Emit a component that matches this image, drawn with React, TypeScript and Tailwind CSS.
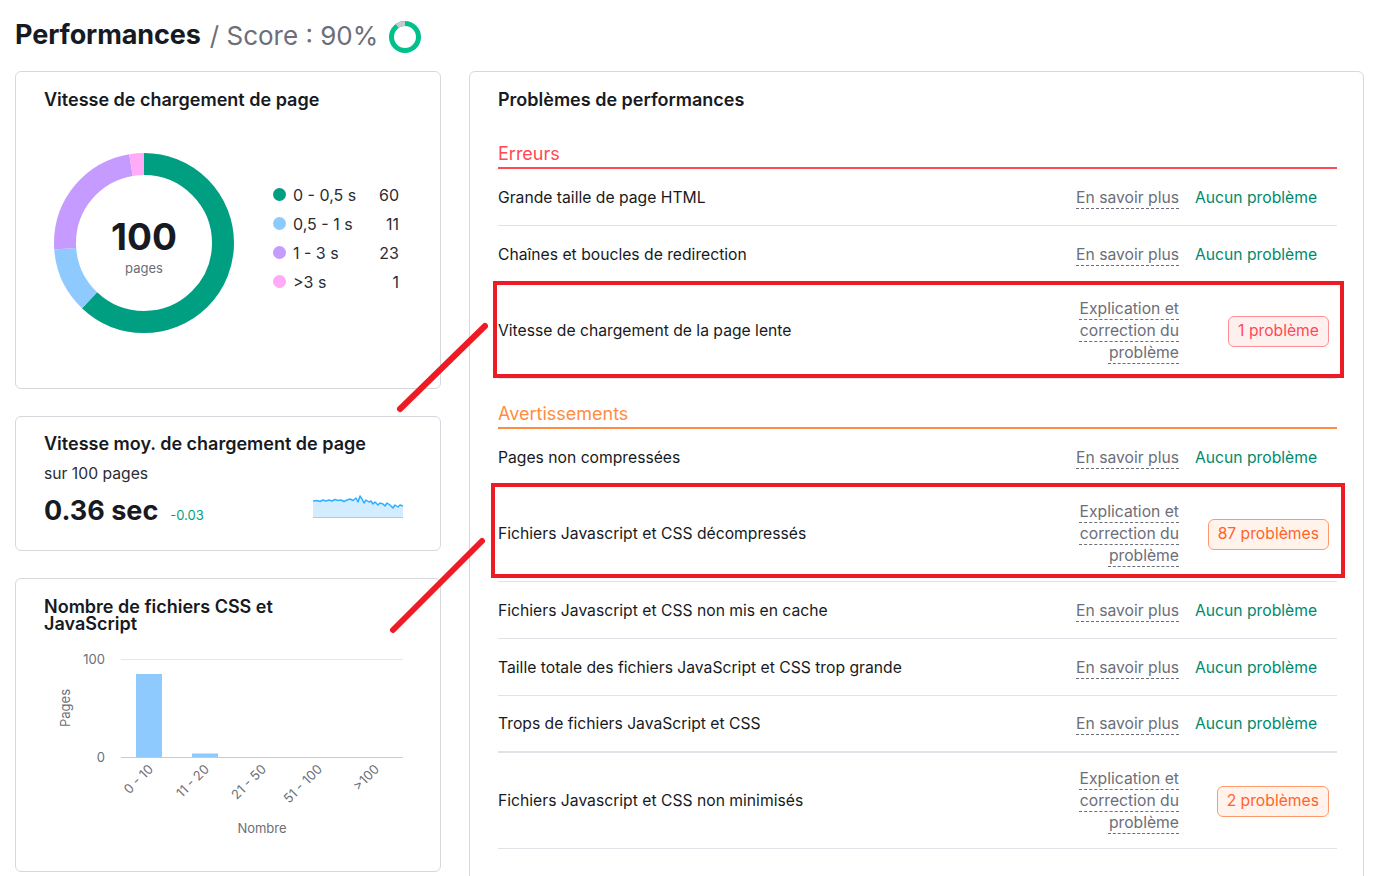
import React from "react";

type Row = {
  label: string;
  issues?: string;
  tone?: "red" | "orange";
};

const sections: { title: string; color: string; rows: Row[] }[] = [
  {
    title: "Erreurs",
    color: "red",
    rows: [
      { label: "Grande taille de page HTML" },
      { label: "Chaînes et boucles de redirection" },
      { label: "Vitesse de chargement de la page lente", issues: "1 problème", tone: "red" },
    ],
  },
  {
    title: "Avertissements",
    color: "orange",
    rows: [
      { label: "Pages non compressées" },
      { label: "Fichiers Javascript et CSS décompressés", issues: "87 problèmes", tone: "orange" },
      { label: "Fichiers Javascript et CSS non mis en cache" },
      { label: "Taille totale des fichiers JavaScript et CSS trop grande" },
      { label: "Trops de fichiers JavaScript et CSS" },
      { label: "Fichiers Javascript et CSS non minimisés", issues: "2 problèmes", tone: "orange" },
    ],
  },
  {
    title: "Avis",
    color: "blue",
    rows: [
      { label: "Pages avec des liens JavaScript et CSS brisés" },
      { label: "Fichiers JavaScript et CSS sans cache" },
    ],
  },
];

const legend = [
  { label: "0 - 0,5 s", value: 60, color: "bg-[#009f81]" },
  { label: "0,5 - 1 s", value: 11, color: "bg-[#8fcaff]" },
  { label: "1 - 3 s", value: 23, color: "bg-[#c69bff]" },
  { label: ">3 s", value: 1, color: "bg-[#ffabf7]" },
];

const donut = [
  { f: 0.62, color: "#009f81" },
  { f: 0.117, color: "#8fcaff" },
  { f: 0.235, color: "#c69bff" },
  { f: 0.028, color: "#ffabf7" },
];

const spark: [number, number][] = [
  [0, 6], [4, 5.5], [7, 6.5], [10, 5], [13, 6], [16, 5], [19, 6], [22, 4.5], [25, 5.5],
  [28, 5], [31, 6.5], [34, 5], [37, 4], [40, 5.5], [43, 3], [45, 7], [47, 1], [49, 4],
  [51, 8], [53, 5], [56, 7], [58, 6], [60, 9], [62, 7], [65, 10], [67, 8], [70, 9],
  [72, 11], [74, 8], [77, 10], [80, 13], [82, 10], [85, 12], [87, 10], [90, 11],
];

const Donut = () => {
  const r = 79;
  const c = 2 * Math.PI * r;
  let offset = 0;
  return (
    <svg width="180" height="180" viewBox="0 0 180 180">
      <g transform="rotate(-90 90 90)">
        {donut.map((s, i) => {
          const el = (
            <circle
              key={i}
              cx="90"
              cy="90"
              r={r}
              fill="none"
              stroke={s.color}
              strokeWidth="22"
              strokeDasharray={`${s.f * c} ${c}`}
              strokeDashoffset={-offset * c}
            />
          );
          offset += s.f;
          return el;
        })}
      </g>
      <text x="90" y="97" textAnchor="middle" fontFamily="Inter" fontWeight="700" fontSize="37" fill="#171a22">
        100
      </text>
      <text x="90" y="120" textAnchor="middle" fontFamily="Inter" fontSize="13" fill="#6c6e79">
        pages
      </text>
    </svg>
  );
};

const Sparkline = () => {
  const line = spark.map(([x, y], i) => `${i ? "L" : "M"}${x} ${y}`).join(" ");
  return (
    <svg width="90" height="24" viewBox="0 0 90 24">
      <path d={`${line} L90 22 L0 22 Z`} fill="#d4ecff" />
      <path d={line} fill="none" stroke="#2cb0ff" strokeWidth="1.5" strokeLinejoin="round" />
      <line x1="0" y1="22.5" x2="90" y2="22.5" stroke="#c2c4cc" strokeWidth="1" />
    </svg>
  );
};

const BarChart = () => {
  const slots = ["0 - 10", "11 - 20", "21 - 50", "51 - 100", ">100"];
  const centers = [105, 161, 218, 274, 331];
  return (
    <svg width="368" height="200" viewBox="0 0 368 200" fontFamily="Inter" fontSize="13" fill="#6c6e79">
      <line x1="77" y1="17.5" x2="359" y2="17.5" stroke="#e6e7ec" />
      <rect x="92" y="32" width="26" height="83" fill="#8fcaff" />
      <rect x="148" y="111.5" width="26" height="3.5" fill="#8fcaff" />
      <line x1="77" y1="115.5" x2="359" y2="115.5" stroke="#c8cad2" />
      <text x="61" y="22" textAnchor="end">100</text>
      <text x="61" y="120" textAnchor="end">0</text>
      <text transform="translate(26 66) rotate(-90)" textAnchor="middle">Pages</text>
      {slots.map((s, i) => (
        <text key={s} transform={`translate(${centers[i] + 5} 128) rotate(-45)`} textAnchor="end">
          {s}
        </text>
      ))}
      <text x="218" y="191" textAnchor="middle">Nombre</text>
    </svg>
  );
};

const dashed = "underline decoration-dashed decoration-1 decoration-[#6c6e79] underline-offset-[5px]";

const IssueRow = ({ row, last }: { row: Row; last?: boolean }) => {
  const tall = !!row.issues;
  return (
    <div
      className={`flex items-center pr-[8px] pt-[1px] border-[#e2e3e9] ${last ? "border-b-2" : "border-b"} ${
        tall ? "h-[96px]" : "h-[57px]"
      }`}
    >
      <div className="flex-1 text-[15.7px] text-[#171a22]">{row.label}</div>
      <div className="w-[110px] text-right text-[15.7px] leading-[22px] text-[#6c6e79]">
        {tall ? (
          <>
            <span className={dashed}>Explication et</span>
            <br />
            <span className={dashed}>correction du</span>
            <br />
            <span className={dashed}>problème</span>
          </>
        ) : (
          <span className={dashed}>En savoir plus</span>
        )}
      </div>
      <div className="ml-[16px] flex w-[134px]">
        {row.issues ? (
          <span
            className={`ml-auto flex h-[31px] items-center rounded-[6px] border px-[9px] text-[15.7px] ${
              row.tone === "red"
                ? "border-[#ff8f93] bg-[#fff0f0] text-[#ff4953]"
                : "border-[#ff9a6c] bg-[#fff3ec] text-[#ff642d]"
            }`}
          >
            {row.issues}
          </span>
        ) : (
          <span className="text-[15.7px] text-[#008a6d]">Aucun problème</span>
        )}
      </div>
    </div>
  );
};

const App = () => {
  return (
    <div className="relative min-h-screen overflow-hidden bg-white font-['Inter',sans-serif] text-[#171a22]">
      <div className="pl-[15px] pr-[25px] pt-[17px]">
        <div className="flex h-[36px] items-center pt-[1px]">
          <span className="text-[27px] font-bold tracking-[-0.1px]">Performances</span>
          <span className="ml-[9px] text-[26px] text-[#6c6e79]">/ Score : 90%</span>
          <svg className="ml-[10px] mt-[2px]" width="34" height="34" viewBox="0 0 34 34">
            <circle cx="17" cy="17" r="13.5" fill="none" stroke="#00c08b" strokeWidth="5" />
            <circle
              cx="17"
              cy="17"
              r="13.5"
              fill="none"
              stroke="#c6c9d0"
              strokeWidth="5"
              strokeDasharray={`${2 * Math.PI * 13.5 * 0.1} 200`}
              transform="rotate(-126 17 17)"
            />
          </svg>
        </div>

        <div className="mt-[18px] flex items-start gap-[28px]">
          {/* left column */}
          <div className="flex w-[426px] flex-col gap-[27px]">
            <div className="h-[318px] rounded-[6px] border border-[#d6d8de] px-[28px] pt-[17px]">
              <h2 className="text-[18px] font-semibold leading-[22px]">Vitesse de chargement de page</h2>
              <div className="mt-[42px] flex items-start">
                <div className="ml-[10px]">
                  <Donut />
                </div>
                <div className="ml-[39px] mt-[27px] w-[126px]">
                  {legend.map((l) => (
                    <div key={l.label} className="flex h-[29px] items-center text-[16px] text-[#2a2c35]">
                      <span className={`h-[13px] w-[13px] rounded-full ${l.color}`} />
                      <span className="ml-[7px] flex-1">{l.label}</span>
                      <span>{l.value}</span>
                    </div>
                  ))}
                </div>
              </div>
            </div>

            <div className="h-[135px] rounded-[6px] border border-[#d6d8de] px-[28px] pt-[16px]">
              <h2 className="text-[18px] font-semibold leading-[22px]">Vitesse moy. de chargement de page</h2>
              <div className="mt-[8px] text-[15.7px] leading-[22px] text-[#2a2c35]">sur 100 pages</div>
              <div className="mt-[9px] flex items-center justify-between">
                <div className="flex items-baseline">
                  <span className="text-[27px] font-bold leading-[34px]">0.36 sec</span>
                  <span className="ml-[12px] text-[13px] text-[#009f81]">-0.03</span>
                </div>
                <div className="mr-[9px] -mt-[8px]">
                  <Sparkline />
                </div>
              </div>
            </div>

            <div className="h-[294px] rounded-[6px] border border-[#d6d8de] px-[28px] pt-[19px]">
              <h2 className="text-[18px] font-semibold leading-[17px]">
                Nombre de fichiers CSS et
                <br />
                JavaScript
              </h2>
              <div className="mt-[10px]">
                <BarChart />
              </div>
            </div>
          </div>

          {/* right panel */}
          <div className="flex-1 rounded-[6px] border border-[#d6d8de] pl-[28px] pr-[26px] pt-[17px] pb-[40px]">
            <h2 className="text-[18px] font-semibold leading-[22px]">Problèmes de performances</h2>
            <div className="mt-[8px]">
              {sections.map((s) => (
                <div key={s.title}>
                  <div
                    className={`border-b-2 pt-[24px] pb-[2px] text-[18px] leading-[22px] ${
                      s.color === "red"
                        ? "border-[#ff4953] text-[#ff4953]"
                        : s.color === "orange"
                        ? "border-[#ff8c43] text-[#ff8c43]"
                        : "border-[#2b94ff] text-[#2b94ff]"
                    }`}
                  >
                    {s.title}
                  </div>
                  {s.rows.map((r, i) => (
                    <IssueRow key={r.label} row={r} last={s.color === "orange" && i === 4} />
                  ))}
                </div>
              ))}
            </div>
          </div>
        </div>
      </div>

      {/* annotations */}
      <svg className="pointer-events-none absolute left-0 top-0" width="1389" height="876" viewBox="0 0 1389 876">
        <rect x="495" y="283" width="847" height="93" fill="none" stroke="#ed1c24" strokeWidth="4" />
        <rect x="493" y="485" width="850" height="91" fill="none" stroke="#ed1c24" strokeWidth="4" />
        <line x1="400" y1="409" x2="485" y2="326" stroke="#ed1c24" strokeWidth="6" strokeLinecap="round" />
        <line x1="393" y1="630" x2="482" y2="541" stroke="#ed1c24" strokeWidth="6" strokeLinecap="round" />
      </svg>
    </div>
  );
};

export default App;
